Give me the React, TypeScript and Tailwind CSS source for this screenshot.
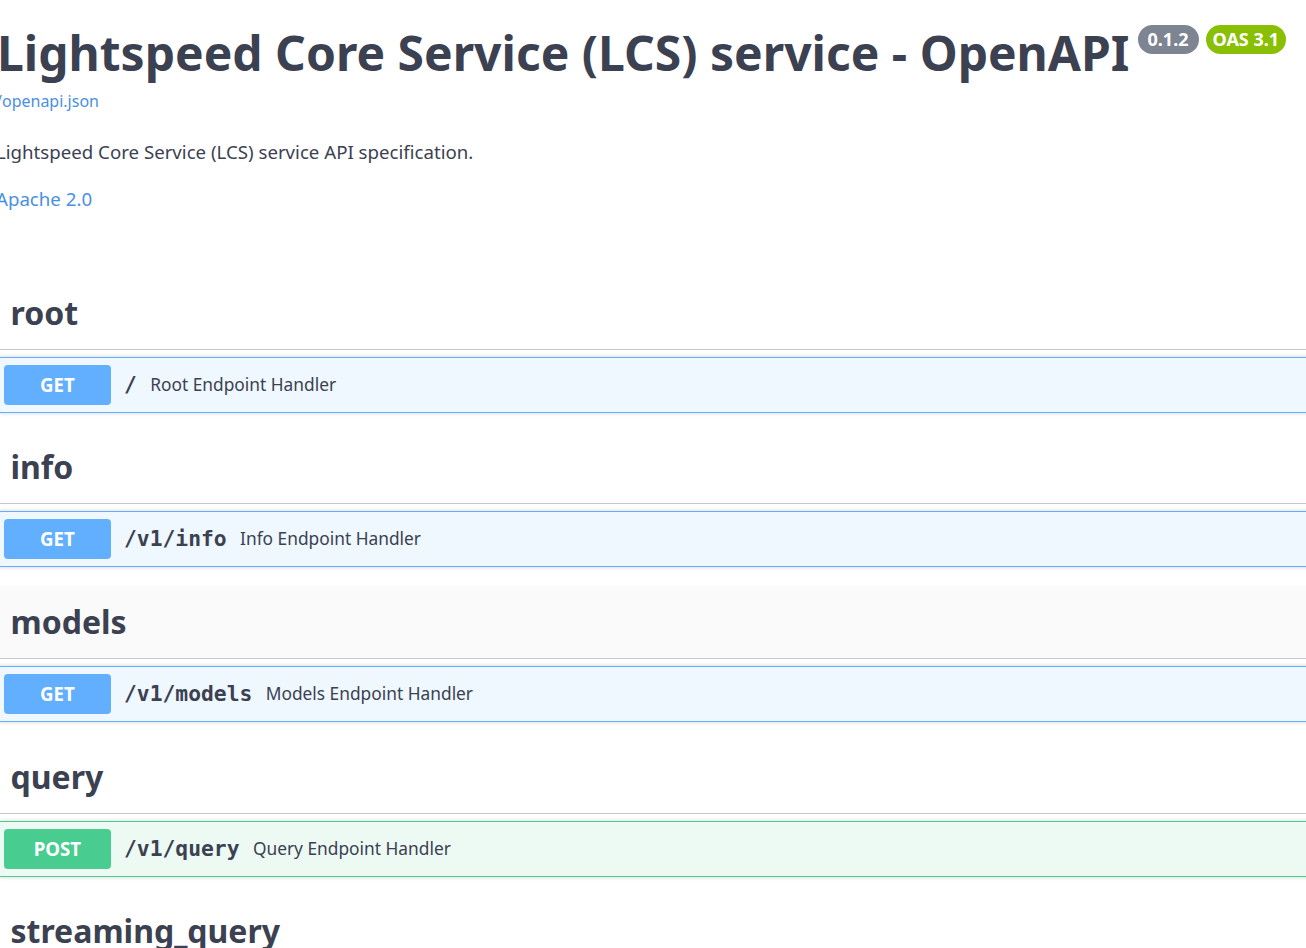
import React from 'react';

type Op = { method: 'GET' | 'POST'; path: string; summary: string };
type Section = { tag: string; hover?: boolean; ops: Op[] };

const sections: Section[] = [
  { tag: 'root', ops: [{ method: 'GET', path: '/', summary: 'Root Endpoint Handler' }] },
  { tag: 'info', ops: [{ method: 'GET', path: '/v1/info', summary: 'Info Endpoint Handler' }] },
  { tag: 'models', hover: true, ops: [{ method: 'GET', path: '/v1/models', summary: 'Models Endpoint Handler' }] },
  { tag: 'query', ops: [{ method: 'POST', path: '/v1/query', summary: 'Query Endpoint Handler' }] },
  { tag: 'streaming_query', ops: [] },
];

function OpBlock({ op }: { op: Op }) {
  const isGet = op.method === 'GET';
  return (
    <div
      className={
        'mt-[7px] mb-[18.67px] flex h-[56px] items-center rounded-[5px] border px-[7px] shadow-[0_0_4px_rgba(0,0,0,0.19)] ' +
        (isGet ? 'border-[#61affe] bg-[#eff7ff]' : 'border-[#49cc90] bg-[#edfaf4]')
      }
    >
      <span
        className={
          'flex h-[40px] w-[106.67px] items-center justify-center rounded-[4px] text-[18.67px] font-bold text-white ' +
          (isGet ? 'bg-[#61affe]' : 'bg-[#49cc90]')
        }
      >
        {op.method}
      </span>
      <span className="px-[13.33px] font-['DejaVu_Sans_Mono',monospace] text-[21.33px] font-bold text-[#3b4151]">
        {op.path}
      </span>
      <span className="text-[17.33px] text-[#3b4151]">{op.summary}</span>
    </div>
  );
}

export default function App() {
  return (
    <div className="min-h-screen w-full overflow-hidden bg-white font-['Noto_Sans',sans-serif] text-[#3b4151]">
      <div className="ml-[-4px] w-[1460px] pt-[24px]">
        <div className="flex items-start">
          <h2 className="m-0 ml-[1px] text-[48px] leading-[57.6px] font-bold text-[#3b4151]">
            Lightspeed Core Service (LCS) service - OpenAPI
          </h2>
          <span className="mt-[1px] ml-[8px] flex h-[29px] items-center rounded-full bg-[#7d8492] px-[10px] text-[18px] font-bold text-white">
            0.1.2
          </span>
          <span className="mt-[1px] ml-[7px] flex h-[29px] items-center rounded-full bg-[#89bf04] px-[7px] text-[18px] font-bold text-white">
            OAS 3.1
          </span>
        </div>
        <a className="mt-[7px] block text-[16px] leading-[24px] text-[#4990e2]">/openapi.json</a>
        <p className="mt-[25px] text-[18.67px] leading-[28px]">
          Lightspeed Core Service (LCS) service API specification.
        </p>
        <a className="mt-[19px] block text-[18.67px] leading-[28px] text-[#4990e2]">Apache 2.0</a>

        <div className="mt-[64px]">
          {sections.map((s) => (
            <div key={s.tag}>
              <h3
                className={
                  'flex h-[73px] items-center border-b border-[#c4c6cb] pl-[14.5px] text-[32px] font-bold ' +
                  (s.hover ? 'bg-[#fafafa]' : '')
                }
              >
                {s.tag}
              </h3>
              {s.ops.map((op) => (
                <OpBlock key={op.path} op={op} />
              ))}
            </div>
          ))}
        </div>
      </div>
    </div>
  );
}
